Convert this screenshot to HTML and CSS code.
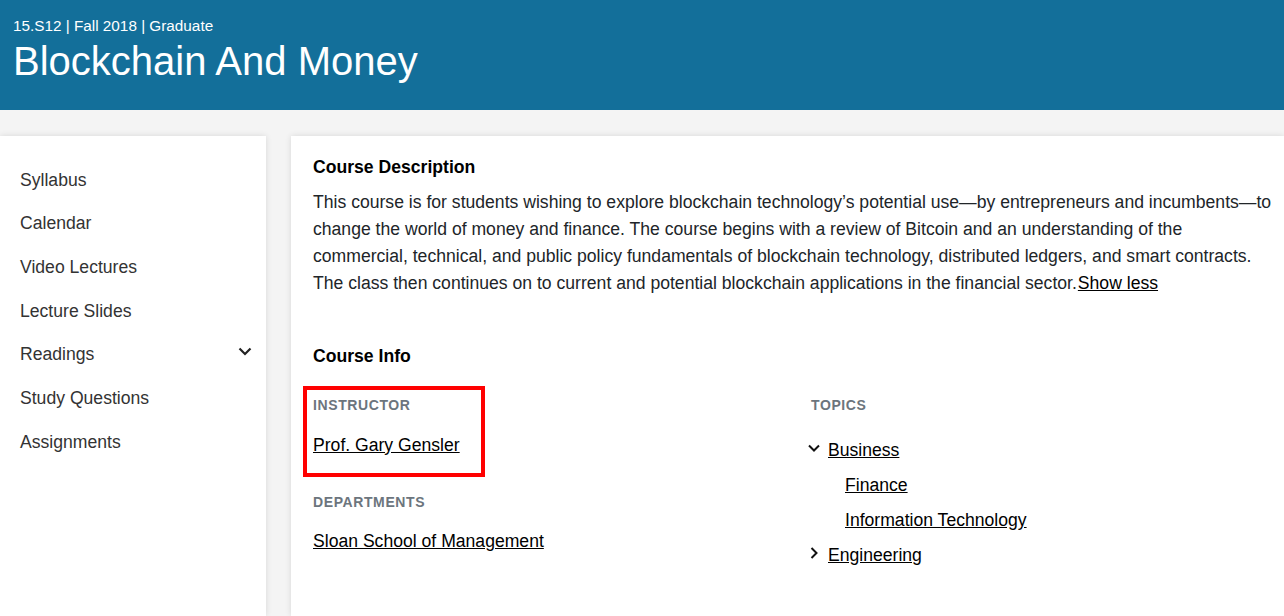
FILE: index.html
```html
<!DOCTYPE html>
<html lang="en">
<head>
<meta charset="utf-8">
<title>Blockchain And Money</title>
<link rel="stylesheet" href="styles.css">
</head>
<body>
<header class="banner">
  <div class="meta">15.S12 | Fall 2018 | Graduate</div>
  <h1 class="title">Blockchain And Money</h1>
</header>
<div class="layout">
  <nav class="sidebar">
    <a class="nav-item" href="#">Syllabus</a>
    <a class="nav-item" href="#">Calendar</a>
    <a class="nav-item" href="#">Video Lectures</a>
    <a class="nav-item" href="#">Lecture Slides</a>
    <a class="nav-item has-sub" href="#">Readings
      <svg class="nav-chev" width="14" height="9" viewBox="0 0 14 9"><path d="M1.5 1.5 L7 7 L12.5 1.5" fill="none" stroke="#222" stroke-width="2.2"/></svg>
    </a>
    <a class="nav-item" href="#">Study Questions</a>
    <a class="nav-item" href="#">Assignments</a>
  </nav>
  <main class="content">
    <h2 class="heading">Course Description</h2>
    <p class="desc">This course is for students wishing to explore blockchain technology’s potential use—by entrepreneurs and incumbents—to change the world of money and finance. The course begins with a review of Bitcoin and an understanding of the commercial, technical, and public policy fundamentals of blockchain technology, distributed ledgers, and smart contracts. The class then continues on to current and potential blockchain applications in the financial sector.<a class="link show-less" href="#">Show less</a></p>
    <h2 class="heading info-heading">Course Info</h2>
    <div class="info-grid">
      <div class="info-col">
        <div class="highlight">
          <div class="label">INSTRUCTOR</div>
          <a class="link big-link" href="#">Prof. Gary Gensler</a>
        </div>
        <div class="label dept-label">DEPARTMENTS</div>
        <a class="link big-link dept-link" href="#">Sloan School of Management</a>
      </div>
      <div class="info-col topics-col">
        <div class="label">TOPICS</div>
        <ul class="topics">
          <li class="topic">
            <svg class="tchev" width="12" height="12" viewBox="0 0 12 12"><path d="M1 3.5 L6 8.5 L11 3.5" fill="none" stroke="#111" stroke-width="2"/></svg>
            <a class="link" href="#">Business</a>
          </li>
          <li class="topic sub"><a class="link" href="#">Finance</a></li>
          <li class="topic sub"><a class="link" href="#">Information Technology</a></li>
          <li class="topic">
            <svg class="tchev" width="12" height="12" viewBox="0 0 12 12"><path d="M3.5 1 L8.5 6 L3.5 11" fill="none" stroke="#111" stroke-width="2"/></svg>
            <a class="link" href="#">Engineering</a>
          </li>
        </ul>
      </div>
    </div>
  </main>
</div>
</body>
</html>
```
FILE: styles.css
```css
* { box-sizing: border-box; }
html, body {
  margin: 0;
  padding: 0;
  height: 100%;
  overflow: hidden;
}
body {
  font-family: "Liberation Sans", Arial, sans-serif;
  background: #f4f4f4;
  color: #212529;
}
.banner {
  background: #136f9a;
  color: #fff;
  height: 110px;
  padding: 16px 13px 0;
}
.meta {
  font-size: 15.3px;
  line-height: 20px;
}
.title {
  margin: 2px 0 0;
  font-weight: normal;
  font-size: 40px;
  line-height: 46px;
}
.layout {
  display: flex;
  gap: 25px;
  padding-top: 26px;
  height: calc(100% - 110px);
}
.sidebar {
  width: 266px;
  flex: none;
  background: #fff;
  box-shadow: 0 0 6px rgba(0,0,0,0.12);
  padding-top: 22px;
  display: flex;
  flex-direction: column;
}
.nav-item {
  display: flex;
  justify-content: space-between;
  align-items: center;
  padding: 8.65px 14px 8.65px 20px;
  font-size: 17.6px;
  line-height: 26.4px;
  color: #333;
  text-decoration: none;
}
.nav-chev { margin-top: -6px; }
.content {
  flex: 1;
  background: #fff;
  box-shadow: 0 0 6px rgba(0,0,0,0.12);
  padding: 18px 6px 0 22px;
}
.heading {
  margin: 0;
  font-size: 17.6px;
  line-height: 26.4px;
  font-weight: bold;
  color: #000;
}
.desc {
  margin: 9px 0 0;
  font-size: 17.6px;
  line-height: 26.8px;
}
.link {
  color: #000;
  text-decoration: underline;
}
.show-less { margin-left: 1px; }
.info-heading { margin-top: 46px; }
.info-grid {
  display: grid;
  grid-template-columns: 498px 1fr;
  margin-top: 17px;
}
.highlight {
  border: 4px solid #f00;
  margin-left: -10px;
  width: 182px;
  padding: 5px 6px 15px;
}
.label {
  font-size: 14px;
  line-height: 21px;
  font-weight: bold;
  letter-spacing: 0.6px;
  color: #6c757d;
}
.big-link {
  display: inline-block;
  margin-top: 16px;
  font-size: 17.6px;
  line-height: 26.4px;
}
.dept-label { margin-top: 15px; }
.dept-link { margin-top: 15px; }
.topics-col { padding-top: 9px; }
.topics {
  list-style: none;
  margin: 21px 0 0;
  padding: 0;
}
.topic {
  display: flex;
  align-items: center;
  font-size: 17.6px;
  line-height: 26.4px;
  margin-bottom: 8.6px;
  margin-left: -3px;
}
.tchev { margin-right: 8px; margin-top: -4px; }
.topic.sub { padding-left: 37px; }
```
